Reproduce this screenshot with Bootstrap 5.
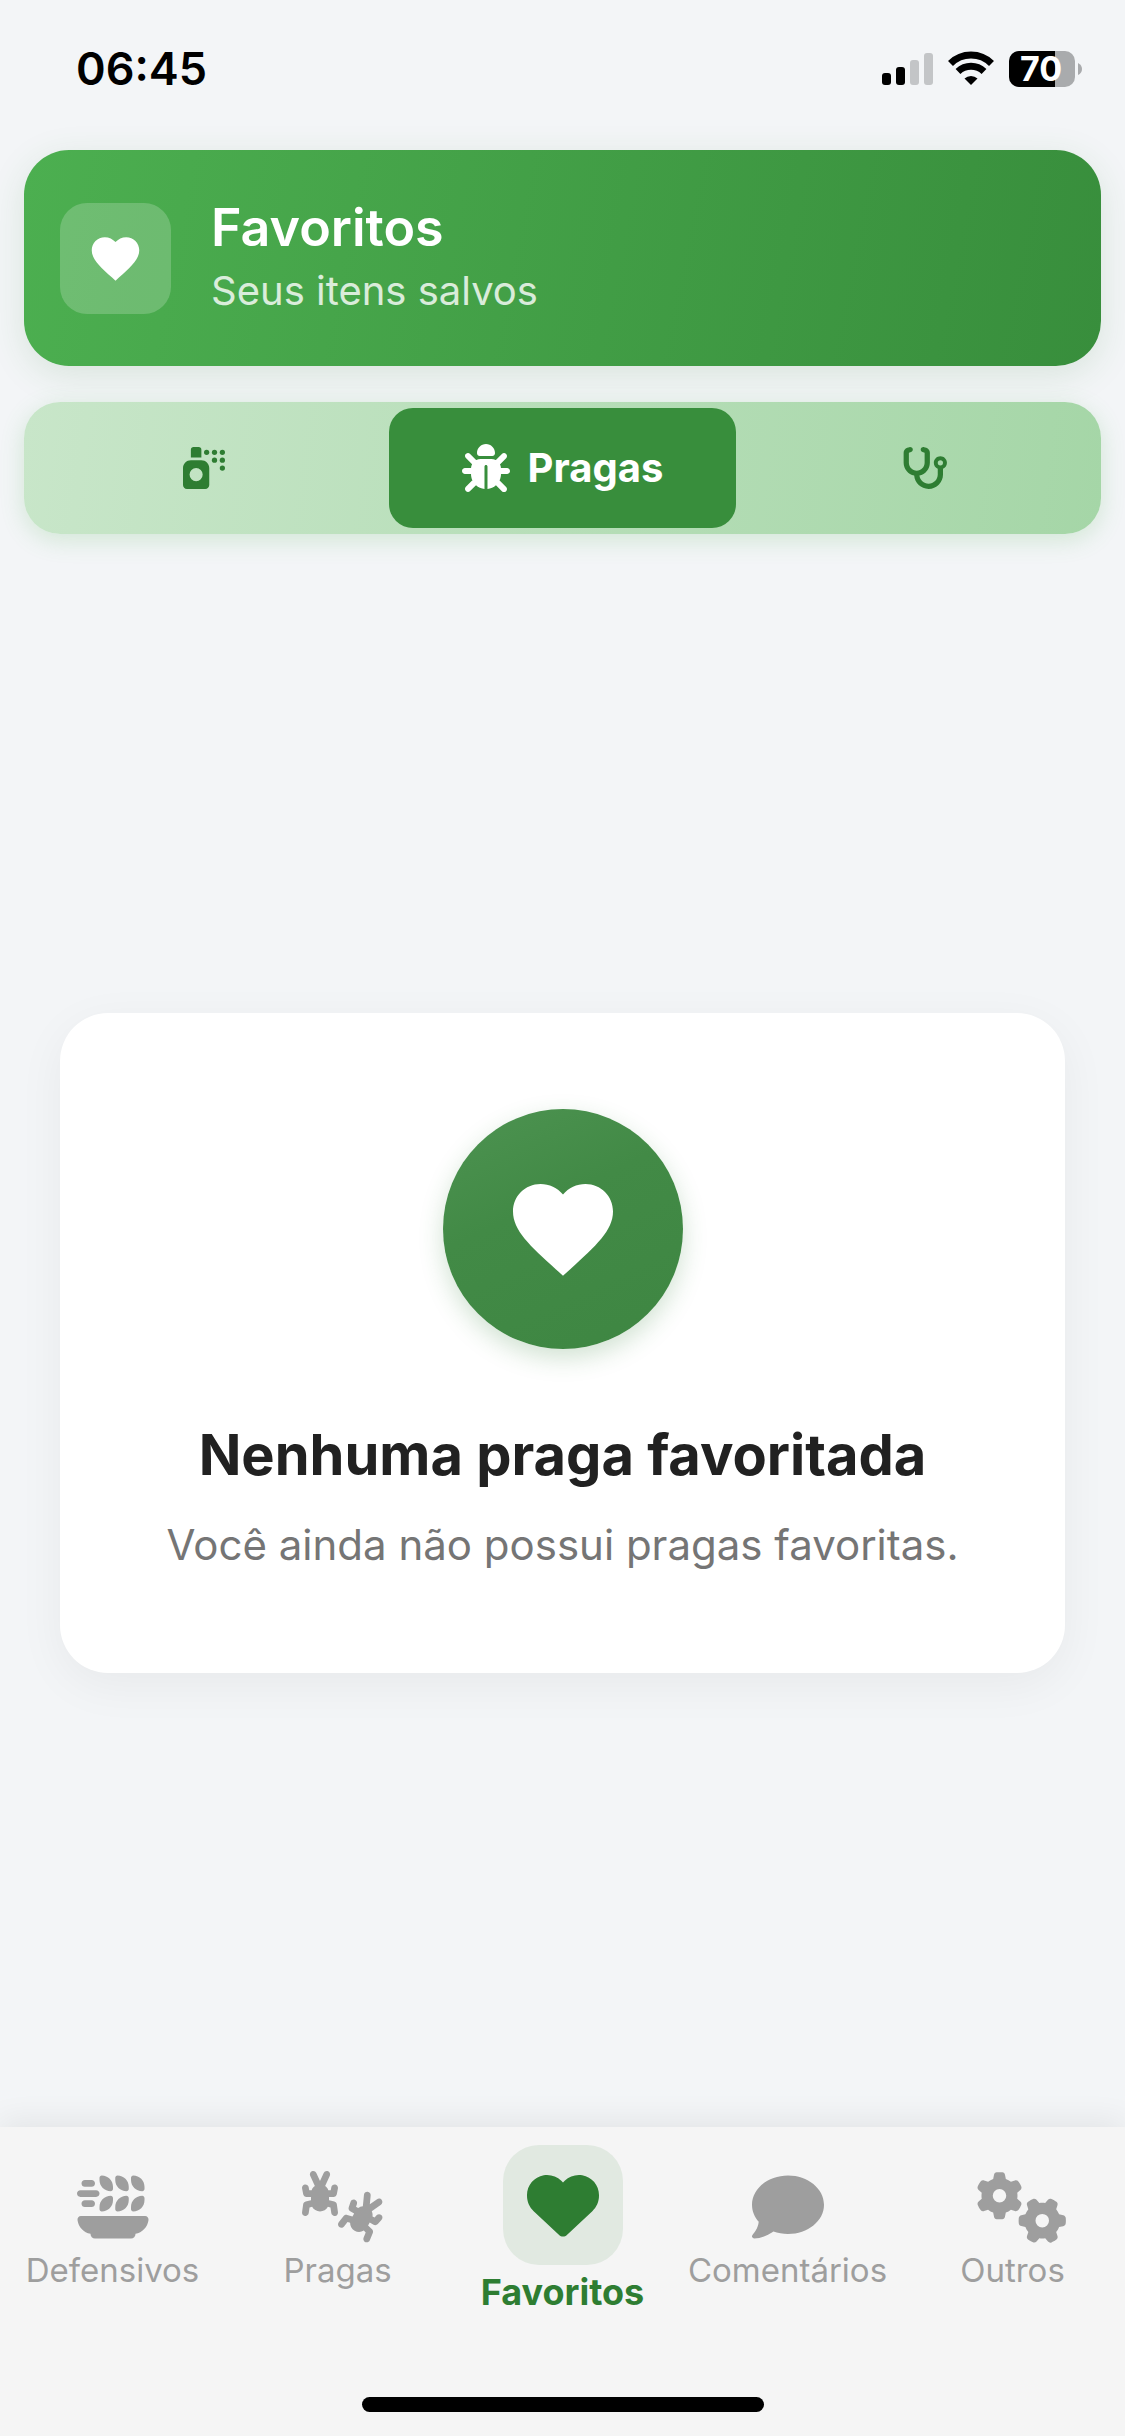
<!DOCTYPE html>
<html lang="pt-BR">
<head>
<meta charset="utf-8">
<meta name="viewport" content="width=device-width, initial-scale=1">
<title>Favoritos</title>
<link href="https://cdn.jsdelivr.net/npm/bootstrap@5.3.0/dist/css/bootstrap.min.css" rel="stylesheet">
<style>
  body { font-family: Inter, "Liberation Sans", sans-serif; background: #f3f5f7; color: #212121; }
  svg { display: block; overflow: visible; fill: currentColor; flex: none; }
  .status-bar { height: 150px; padding: 0 42px 12px 76px; color: #000; }
  .clock { font-size: 45px; line-height: 54px; font-weight: 600; }
  .hero { margin: 0 24px; padding: 45px 36px; gap: 40px; border-radius: 45px; color: #fff;
    background: linear-gradient(101deg, #4caf50, #388e3c); box-shadow: 0 9px 36px rgba(46, 125, 50, .13); }
  .hero-icon { padding: 27px; border-radius: 27px; background: rgba(255, 255, 255, .2); }
  .hero-title { font-size: 52px; line-height: 66px; font-weight: 600; }
  .hero-sub { font-size: 40px; line-height: 60px; opacity: .8; }
  .tab-strip { display: grid; grid-template-columns: repeat(3, 1fr); gap: 12px; margin: 36px 24px 0; padding: 6px;
    border-radius: 36px; background: linear-gradient(97deg, #c8e6c9, #a5d6a7); box-shadow: 0 6px 24px rgba(76, 175, 80, .2); }
  .tab-btn { height: 120px; border: 0; border-radius: 24px; gap: 18px; background: none; color: #2e7d32;
    font-size: 40px; line-height: 48px; font-weight: 700; }
  .tab-btn.active { background: #388e3c; color: #fff; }
  .empty-area { padding: 24px 60px 0; }
  .empty-card { padding: 96px 72px 98px; border-radius: 48px; background: #fff; box-shadow: 0 12px 48px rgba(0, 0, 0, .05); }
  .empty-disc { padding: 60px; border-radius: 50%; color: #fff; margin-bottom: 70px;
    background: linear-gradient(155deg, #4d9351, #428a46 40%, #3e8642); box-shadow: 0 9px 24px rgba(46, 125, 50, .22); }
  .empty-title { font-size: 56px; line-height: 72px; font-weight: 700; margin-bottom: 24px; }
  .empty-sub { font-size: 42px; line-height: 60px; color: #757575; }
  .bottom-bar { background: #f5f5f5; box-shadow: 0 -6px 30px rgba(0, 0, 0, .07); padding-bottom: 24px; }
  .bottom-links { display: grid; grid-template-columns: repeat(5, 1fr); height: 204px; }
  .bottom-links a { color: #9e9e9e; text-decoration: none; font-size: 33px; line-height: 48px; gap: 3px; padding-top: 44px; white-space: nowrap; }
  .bottom-links a.active { color: #2e7d32; font-size: 36px; font-weight: 700; padding-top: 18px; }
  .active-pill { padding: 24px; border-radius: 36px; background: #e1e9e1; }
  .home-bar { width: 36%; max-width: 402px; height: 15px; border-radius: 8px; background: #000; margin-top: 66px; }
  .battery-text { font: 700 34px Inter, sans-serif; }
</style>
</head>
<body class="d-flex flex-column min-vh-100">

<div class="status-bar d-flex align-items-center justify-content-between">
  <span class="clock">06:45</span>
  <svg width="201" height="36" viewBox="0 0 201 36" role="img" aria-label="Sinal, Wi-Fi e bateria 70%">
    <rect x="0" y="22" width="9" height="12" rx="3"/>
    <rect x="14" y="16" width="9" height="18" rx="3"/>
    <rect x="28" y="9" width="9" height="25" rx="3" fill="#c3c5c7"/>
    <rect x="42" y="2" width="9" height="32" rx="3" fill="#c3c5c7"/>
    <g fill="none" stroke="#000" stroke-width="7">
      <path d="M68.500 12.500a29 29 0 0 1 41 0"/>
      <path d="M76 20.500a19 19 0 0 1 26 0"/>
    </g>
    <path d="M82.500 27.500a9.500 9.500 0 0 1 13 0L89 34z"/>
    <rect x="127" y="0" width="66" height="36" rx="10" fill="#a9abad"/>
    <path d="M137 0h36v36h-36a10 10 0 0 1-10-10V10a10 10 0 0 1 10-10z"/>
    <path d="M196 12q4 2 4 6t-4 6z" fill="#a9abad"/>
    <text class="battery-text" x="159" y="30" text-anchor="middle" fill="#fff">70</text>
  </svg>
</div>

<header class="hero d-flex align-items-center">
  <div class="hero-icon">
    <svg width="57" height="57" viewBox="0 0 24 24" aria-hidden="true"><path d="M12 21.350l-1.450-1.320C5.400 15.360 2 12.280 2 8.500 2 5.420 4.420 3 7.500 3c1.740 0 3.410.81 4.500 2.090C13.090 3.810 14.760 3 16.500 3 19.580 3 22 5.420 22 8.500c0 3.780-3.400 6.860-8.550 11.540L12 21.350z"/></svg>
  </div>
  <div>
    <h1 class="hero-title m-0">Favoritos</h1>
    <p class="hero-sub m-0">Seus itens salvos</p>
  </div>
</header>

<div class="tab-strip" role="tablist">
  <button type="button" role="tab" aria-selected="false" aria-label="Defensivos" class="tab-btn d-flex align-items-center justify-content-center">
    <svg width="42" height="42" viewBox="0 0 512 512"><path fill-rule="evenodd" d="M128 0h64c17.700 0 32 14.300 32 32v96H96V32c0-17.700 14.300-32 32-32zM96 160h128c53 0 96 43 96 96v208c0 26.500-21.500 48-48 48H48c-26.500 0-48-21.500-48-48V256c0-53 43-96 96-96zm64 96a80 80 0 1 0 0 160 80 80 0 1 0 0-160z"/><circle cx="288" cy="64" r="32"/><circle cx="384" cy="64" r="32"/><circle cx="480" cy="64" r="32"/><circle cx="384" cy="160" r="32"/><circle cx="480" cy="160" r="32"/><circle cx="480" cy="256" r="32"/></svg>
  </button>
  <button type="button" role="tab" aria-selected="true" class="tab-btn active d-flex align-items-center justify-content-center">
    <svg width="48" height="48" viewBox="0 0 512 512" aria-hidden="true"><path d="M256 0c53 0 96 43 96 96v3.600c0 15.700-12.700 28.400-28.400 28.400H188.400c-15.700 0-28.400-12.700-28.400-28.400V96c0-53 43-96 96-96zM41.400 105.400c12.500-12.500 32.800-12.500 45.300 0l64 64c.7 .7 1.300 1.400 1.900 2.100c14.200-7.300 30.400-11.400 47.500-11.400H312c17.100 0 33.200 4.100 47.500 11.400c.6-.7 1.200-1.400 1.900-2.100l64-64c12.500-12.500 32.800-12.500 45.300 0s12.500 32.800 0 45.300l-64 64c-.7 .7-1.400 1.300-2.100 1.900c6.200 12 10.100 25.300 11.100 39.500H480c17.700 0 32 14.300 32 32s-14.300 32-32 32H416c0 24.600-5.500 47.800-15.400 68.600c2.200 1.300 4.200 2.900 6 4.800l64 64c12.500 12.500 12.500 32.800 0 45.300s-32.800 12.500-45.300 0l-63.100-63.100c-24.500 21.800-55.800 36.200-90.300 39.600V240c0-8.800-7.200-16-16-16s-16 7.200-16 16V479.200c-34.500-3.400-65.800-17.800-90.300-39.600L86.600 502.600c-12.500 12.500-32.800 12.500-45.300 0s-12.500-32.800 0-45.300l64-64c1.900-1.900 3.900-3.400 6-4.800C101.500 367.800 96 344.600 96 320H32c-17.700 0-32-14.300-32-32s14.300-32 32-32H96.300c1.100-14.100 5-27.500 11.100-39.500c-.7-.6-1.400-1.200-2.100-1.900l-64-64c-12.500-12.500-12.500-32.800 0-45.300z"/></svg>
    <span>Pragas</span>
  </button>
  <button type="button" role="tab" aria-selected="false" aria-label="Diagnósticos" class="tab-btn d-flex align-items-center justify-content-center">
    <svg width="42" height="42" viewBox="0 0 512 512"><path d="M142.400 21.900c5.600 16.800-3.500 34.900-20.200 40.500L96 71.100V192c0 53 43 96 96 96s96-43 96-96V71.100l-26.100-8.700c-16.800-5.600-25.800-23.700-20.200-40.500s23.700-25.800 40.500-20.200l26.100 8.700C334.400 19.100 352 43.500 352 71.100V192c0 77.200-54.600 141.600-127.300 156.700C231 404.600 278.400 448 336 448c61.900 0 112-50.100 112-112V265.300c-28.300-12.300-48-40.500-48-73.300c0-44.200 35.800-80 80-80s80 35.800 80 80c0 32.800-19.700 61-48 73.300V336c0 97.200-78.800 176-176 176c-92.900 0-168.900-71.900-175.500-163.100C87.200 334.200 32 269.600 32 192V71.100c0-27.500 17.600-52 43.800-60.700l26.100-8.700c16.800-5.600 34.900 3.500 40.500 20.200zM480 224a32 32 0 1 0 0-64 32 32 0 1 0 0 64z"/></svg>
  </button>
</div>

<main class="empty-area flex-grow-1 d-flex flex-column justify-content-center">
  <section class="empty-card d-flex flex-column align-items-center text-center">
    <div class="empty-disc">
      <svg width="120" height="120" viewBox="0 0 24 24" aria-hidden="true"><path d="M12 21.350l-1.450-1.320C5.400 15.360 2 12.280 2 8.500 2 5.420 4.420 3 7.500 3c1.740 0 3.410.81 4.500 2.090C13.090 3.810 14.760 3 16.500 3 19.580 3 22 5.420 22 8.500c0 3.780-3.400 6.860-8.550 11.540L12 21.350z"/></svg>
    </div>
    <h2 class="empty-title">Nenhuma praga favoritada</h2>
    <p class="empty-sub m-0">Você ainda não possui pragas favoritas.</p>
  </section>
</main>

<footer class="bottom-bar d-flex flex-column align-items-center">
  <nav class="bottom-links w-100">
    <a href="#" class="d-flex flex-column align-items-center">
      <svg width="72" height="72" viewBox="0 0 512 512" aria-hidden="true"><path d="M176 32c44.200 0 80 35.800 80 80v16c0 8.800-7.200 16-16 16c-44.200 0-80-35.800-80-80V48c0-8.800 7.200-16 16-16zM56 64h48c13.300 0 24 10.700 24 24s-10.700 24-24 24H56c-13.300 0-24-10.700-24-24s10.700-24 24-24zM24 136H136c13.300 0 24 10.700 24 24s-10.700 24-24 24H24c-13.300 0-24-10.700-24-24s10.700-24 24-24zm8 96c0-13.300 10.700-24 24-24h48c13.300 0 24 10.700 24 24s-10.700 24-24 24H56c-13.300 0-24-10.700-24-24zM272 48c0-8.800 7.200-16 16-16c44.200 0 80 35.800 80 80v16c0 8.800-7.200 16-16 16c-44.200 0-80-35.800-80-80V48zM400 32c44.200 0 80 35.800 80 80v16c0 8.800-7.200 16-16 16c-44.200 0-80-35.800-80-80V48c0-8.800 7.200-16 16-16zm80 160v16c0 44.200-35.800 80-80 80c-8.800 0-16-7.200-16-16V256c0-44.200 35.800-80 80-80c8.800 0 16 7.200 16 16zM352 176c8.800 0 16 7.200 16 16v16c0 44.200-35.800 80-80 80c-8.800 0-16-7.200-16-16V256c0-44.200 35.800-80 80-80zm-96 16v16c0 44.200-35.800 80-80 80c-8.800 0-16-7.200-16-16V256c0-44.200 35.800-80 80-80c8.800 0 16 7.200 16 16zM3.500 347.600C1.600 332.900 13 320 27.800 320H484.200c14.800 0 26.200 12.900 24.400 27.600C502.300 397.800 464.200 437 416 446v2c0 17.700-14.300 32-32 32H128c-17.700 0-32-14.300-32-32v-2c-48.200-9-86.300-48.200-92.500-98.400z"/></svg>
      <span>Defensivos</span>
    </a>
    <a href="#" class="d-flex flex-column align-items-center">
      <svg width="72" height="72" viewBox="0 0 512 512" aria-hidden="true"><path d="M164.500 107.400l33.400-73.500c5.500-12.100 .1-26.300-11.900-31.800s-26.300-.1-31.800 11.900L128 71.700 101.900 14.100C96.400 2 82.100-3.300 70.100 2.100S52.700 21.900 58.100 33.900l33.400 73.500c-10.200 7.100-18.200 17-22.900 28.600h-17l-4.100-20.700c-2.600-13-15.200-21.400-28.200-18.800S-2.100 111.700 .5 124.700l8 40C10.700 175.900 20.600 184 32 184H64v23.300l-37.800 9.500c-9.500 2.400-16.600 10.200-17.900 19.900l-8 56c-1.900 13.100 7.200 25.300 20.400 27.200s25.300-7.200 27.200-20.400l5.700-40 18.400-4.600C82.700 274.600 103.800 288 128 288s45.300-13.400 56.100-33.200l18.400 4.600 5.700 40c1.900 13.100 14 22.200 27.200 20.400s22.200-14 20.400-27.200l-8-56c-1.400-9.700-8.500-17.500-17.900-19.900L192 207.300V184h32c11.400 0 21.300-8.100 23.500-19.300l8-40c2.600-13-5.800-25.600-18.800-28.200s-25.600 5.800-28.200 18.800L204.300 136h-17c-4.700-11.600-12.700-21.500-22.900-28.600zM496 286.500l65.600-47c10.800-7.700 13.300-22.700 5.600-33.500s-22.700-13.300-33.500-5.600l-51.400 36.800 6.100-62.900c1.300-13.200-8.400-24.900-21.600-26.200s-24.900 8.400-26.200 21.600L432.800 250c-12.300 1-24.200 5.600-34.100 13.300L384 254.800l6.800-20c4.200-12.600-2.500-26.200-15-30.400s-26.200 2.500-30.400 15l-13.100 38.600c-3.700 10.800 .8 22.800 10.700 28.500l27.700 16L359 322.700 321.500 312c-9.400-2.700-19.500 .6-25.500 8.300l-34.900 44.500c-8.200 10.400-6.400 25.500 4.100 33.700s25.500 6.400 33.700-4.100l25-31.800 18.200 5.200c-.5 22.600 11 44.700 32 56.800s45.900 11 65.200-.7l13.600 13.200-15.100 37.500c-4.900 12.300 1 26.300 13.300 31.200s26.300-1 31.200-13.300L503.500 440c3.600-9.100 1.400-19.400-5.600-26.200l-28-27.100 11.600-20.100 27.700 16c9.900 5.700 22.500 3.700 30-4.900L566.200 347c8.700-10 7.800-25.100-2.200-33.900s-25.100-7.800-33.900 2.200l-13.900 15.900-14.700-8.500c1.700-12.400-.2-25-5.500-36.200z"/></svg>
      <span>Pragas</span>
    </a>
    <a href="#" aria-current="page" class="active d-flex flex-column align-items-center">
      <span class="active-pill"><svg width="72" height="72" viewBox="0 0 512 512" aria-hidden="true"><path d="M47.600 300.400L228.300 469.100c7.500 7 17.400 10.900 27.700 10.900s20.200-3.900 27.700-10.900L464.400 300.400c30.400-28.300 47.600-68 47.600-109.500v-5.800c0-69.900-50.500-129.500-119.400-141C347 36.500 300.600 51.400 268 84L256 96 244 84c-32.600-32.600-79-47.500-124.600-39.900C50.500 55.600 0 115.200 0 185.100v5.800c0 41.500 17.200 81.200 47.600 109.500z"/></svg></span>
      <span>Favoritos</span>
    </a>
    <a href="#" class="d-flex flex-column align-items-center">
      <svg width="72" height="72" viewBox="0 0 512 512" aria-hidden="true"><path d="M512 240c0 114.900-114.600 208-256 208c-37.100 0-72.300-6.400-104.100-17.900c-11.900 8.700-31.300 20.600-54.300 30.600C73.600 471.100 44.700 480 16 480c-6.500 0-12.300-3.900-14.800-9.900c-2.500-6-1.100-12.800 3.400-17.400l.3-.3c.3-.3 .7-.7 1.300-1.400c1.100-1.200 2.800-3.100 4.900-5.700c4.100-5 9.600-12.400 15.200-21.600c10-16.600 19.500-38.400 21.400-62.900C17.700 326.800 0 285.100 0 240C0 125.100 114.600 32 256 32s256 93.100 256 208z"/></svg>
      <span>Comentários</span>
    </a>
    <a href="#" class="d-flex flex-column align-items-center">
      <svg width="72" height="72" viewBox="0 0 512 512" aria-hidden="true"><defs><path id="cog" d="M308.500 135.300c7.100-6.300 9.900-16.200 6.200-25c-2.300-5.300-4.800-10.500-7.600-15.500L304 89.400c-3-5-6.300-9.900-9.800-14.600c-5.700-7.600-15.700-10.100-24.700-7.100l-28.200 9.300c-10.700-8.800-23-16-36.200-20.900L199 27.100c-1.900-9.300-9.100-16.700-18.500-17.800C173.900 8.400 167.200 8 160.400 8h-.7c-6.800 0-13.500 .4-20.100 1.200c-9.400 1.100-16.600 8.600-18.500 17.800L115 56.100c-13.300 5-25.500 12.100-36.200 20.900L50.500 67.800c-9-3-19-.5-24.700 7.100c-3.500 4.700-6.800 9.600-9.900 14.600l-3 5.300c-2.800 5-5.300 10.200-7.600 15.600c-3.700 8.700-.9 18.600 6.200 25l22.200 19.800C32.600 161.900 32 168.900 32 176s.6 14.100 1.700 20.900L11.500 216.700c-7.100 6.300-9.900 16.200-6.200 25c2.300 5.300 4.800 10.500 7.600 15.600l3 5.200c3 5.100 6.300 9.900 9.900 14.600c5.700 7.600 15.700 10.100 24.700 7.100l28.200-9.300c10.700 8.800 23 16 36.200 20.900l6.100 29.100c1.900 9.300 9.100 16.700 18.500 17.800c6.700 .8 13.500 1.200 20.400 1.200s13.700-.4 20.400-1.200c9.400-1.100 16.600-8.600 18.500-17.800l6.100-29.100c13.300-5 25.500-12.100 36.200-20.900l28.200 9.300c9 3 19 .5 24.700-7.100c3.500-4.700 6.800-9.500 9.800-14.600l3.100-5.400c2.800-5 5.300-10.200 7.600-15.500c3.700-8.700 .9-18.600-6.200-25l-22.200-19.800c1.100-6.800 1.700-13.800 1.700-20.900s-.6-14.100-1.700-20.900l22.200-19.800zM112 176a48 48 0 1 1 96 0 48 48 0 1 1-96 0z" fill-rule="evenodd"/></defs><use href="#cog"/><use href="#cog" transform="translate(464 353) rotate(90) translate(-160 -176)"/></svg>
      <span>Outros</span>
    </a>
  </nav>
  <div class="home-bar"></div>
</footer>

<script src="https://cdn.jsdelivr.net/npm/bootstrap@5.3.0/dist/js/bootstrap.bundle.min.js"></script>
</body>
</html>
